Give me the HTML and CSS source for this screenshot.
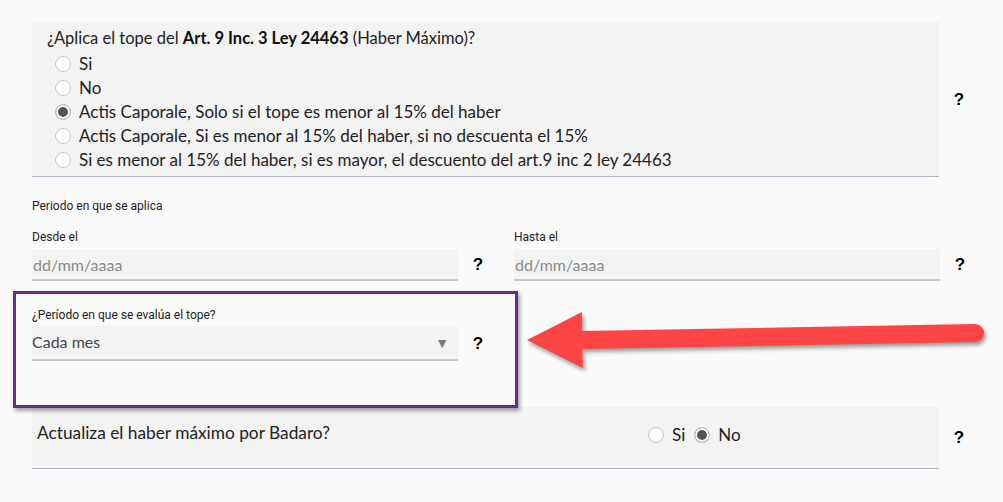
FILE: index.html
```html
<!DOCTYPE html>
<html lang="es">
<head>
    <meta charset="UTF-8">
    <title>Haber Máximo</title>
    <link rel="stylesheet" href="styles.css">
</head>
<body>
    <div class="form">
        <div class="row">
            <div class="panel top-panel">
                <div class="question">¿Aplica el tope del <b>Art. 9 Inc. 3 Ley 24463</b> (Haber Máximo)?</div>
                <div class="options">
                    <label class="option"><input type="radio" name="tope"> Si</label>
                    <label class="option"><input type="radio" name="tope"> No</label>
                    <label class="option"><input type="radio" name="tope" checked> Actis Caporale, Solo si el tope es menor al 15% del haber</label>
                    <label class="option"><input type="radio" name="tope"> Actis Caporale, Si es menor al 15% del haber, si no descuenta el 15%</label>
                    <label class="option"><input type="radio" name="tope"> Si es menor al 15% del haber, si es mayor, el descuento del art.9 inc 2 ley 24463</label>
                </div>
            </div>
            <span class="help">?</span>
        </div>

        <div class="section-label">Periodo en que se aplica</div>
        <div class="pair">
            <div class="field">
                <label class="field-label">Desde el</label>
                <div class="field-row">
                    <div class="input placeholder">dd/mm/aaaa</div>
                    <span class="help">?</span>
                </div>
            </div>
            <div class="field">
                <label class="field-label">Hasta el</label>
                <div class="field-row">
                    <div class="input placeholder">dd/mm/aaaa</div>
                    <span class="help">?</span>
                </div>
            </div>
        </div>

        <div class="field select-field">
            <label class="field-label">¿Período en que se evalúa el tope?</label>
            <div class="field-row">
                <div class="input select">Cada mes <span class="caret">▼</span></div>
                <span class="help">?</span>
            </div>
        </div>

        <div class="row bottom-row">
            <div class="panel bottom-panel">
                <div class="bottom-question">Actualiza el haber máximo por Badaro?</div>
                <div class="inline-options">
                    <label class="option"><input type="radio" name="badaro"> Si</label>
                    <label class="option"><input type="radio" name="badaro" checked> No</label>
                </div>
            </div>
            <span class="help">?</span>
        </div>
    </div>

    <!-- callout: highlight box and arrow -->
    <div class="highlight"></div>
    <svg class="arrow" width="480" height="75" viewBox="0 0 480 75">
        <path d="M7 35 L62 7 L62 26 L455 19 A9 9 0 0 1 455 37 L62 44 L63 63 Z" fill="#fe4545"/>
    </svg>
</body>
</html>
```

FILE: styles.css
```css
body {
    margin: 0;
    background-color: #fafafa;
    font-family: Lato, "Open Sans", sans-serif;
    color: #222;
}
.form {
    padding: 22px 0 40px 32px;
}
.row {
    display: flex;
    align-items: center;
}
.panel {
    width: 907px;
    background-color: #f3f3f3;
    border-bottom: 1px solid #aeb5c5;
    box-sizing: border-box;
}
.help {
    width: 40px;
    text-align: center;
    font-family: "Liberation Sans", Arial, sans-serif;
    font-weight: bold;
    font-size: 17px;
    color: #000;
}
.top-panel {
    padding: 5px 0 4px 15px;
}
.question {
    font-size: 16.5px;
    line-height: 22px;
}
.question b {
    font-weight: bold;
    color: #111;
}
.options {
    margin-top: 3px;
    margin-left: 8px;
}
.option {
    display: flex;
    align-items: center;
    font-size: 17px;
    line-height: 24px;
}
input[type="radio"] {
    appearance: none;
    width: 16px;
    height: 16px;
    margin: 0 8px 0 0;
    border: 1px solid #c6c6c6;
    border-radius: 50%;
    background-color: #fff;
    box-sizing: border-box;
}
input[type="radio"]:checked {
    background-color: #555;
    box-shadow: inset 0 0 0 2px #fff;
}
.section-label {
    margin-top: 21px;
    font-family: Roboto, sans-serif;
    font-size: 12px;
    line-height: 16px;
}
.pair {
    display: flex;
    gap: 16px;
    margin-top: 15px;
}
.field-label {
    display: block;
    font-family: Roboto, sans-serif;
    font-size: 12px;
    line-height: 16px;
    margin-bottom: 4px;
}
.field-row {
    display: flex;
    align-items: center;
}
.input {
    width: 426px;
    height: 30px;
    box-sizing: content-box;
    background-color: #f3f3f3;
    border-bottom: 2px solid #cacaca;
    font-size: 16px;
    line-height: 32px;
}
.placeholder {
    color: #8a8a8a;
    text-indent: 1px;
}
.select-field {
    margin-top: 26px;
}
.select-field .field-label {
    margin-bottom: 3px;
}
.select {
    height: 33px;
    line-height: 31px;
    color: #444;
    position: relative;
}
.caret {
    position: absolute;
    right: 9px;
    top: 1px;
    font-size: 14px;
    color: #7a7a7a;
}
.bottom-row {
    margin-top: 46px;
}
.bottom-panel {
    display: grid;
    grid-template-columns: 611px auto;
    align-items: start;
    height: 62px;
    padding: 16px 0 0 5px;
}
.bottom-question {
    font-size: 17.3px;
    line-height: 20px;
}
.inline-options {
    display: flex;
    gap: 9px;
    margin-top: 2px;
}
.inline-options .option {
    font-size: 17px;
    line-height: 20px;
}
.inline-options input[type="radio"] {
    margin-right: 8px;
}
.highlight {
    position: absolute;
    left: 13px;
    top: 291px;
    width: 505px;
    height: 117px;
    box-sizing: border-box;
    border: 3px solid #6a2a8f;
    box-shadow: 2px 3px 4px rgba(0, 0, 0, 0.35);
}
.arrow {
    position: absolute;
    left: 520px;
    top: 305px;
    filter: drop-shadow(2px 3px 2px rgba(0, 0, 0, 0.4));
}
```
